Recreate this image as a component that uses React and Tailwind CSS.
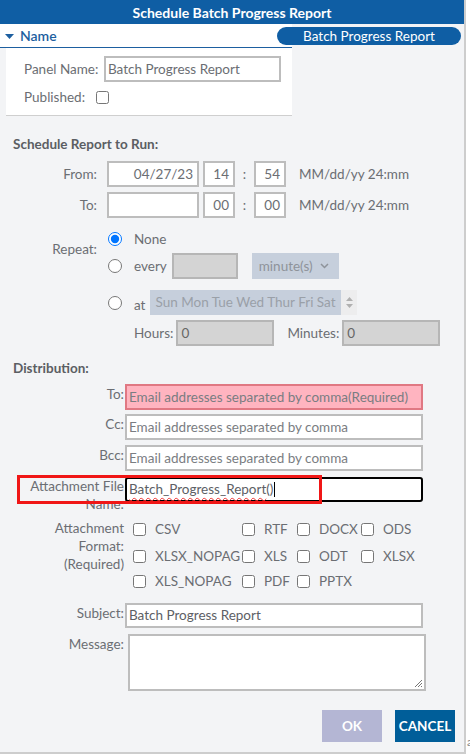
import React from "react";

const F = { fontFamily: "Lato, 'Liberation Sans', sans-serif" };

function Cb({ label, w }) {
  return (
    <div className={`flex items-center ${w}`}>
      <input type="checkbox" readOnly className="m-0 w-[13px] h-[13px]" />
      <span className="ml-[9px]">{label}</span>
    </div>
  );
}

export default function App() {
  return (
    <div className="relative w-[470px] h-[755px] bg-white overflow-hidden text-[#6b6e73] text-[13.5px]" style={F}>
      <span className="absolute left-[467px] top-[733px] text-[12px] text-[#888]">a</span>
      <div className="w-[466px] h-[754px] bg-[#f3f4f6] border-r-2 border-b-2 border-[#cdcdcd] flex flex-col">
        {/* Title */}
        <div className="h-[24px] bg-[#0f5ea4] text-white font-bold text-[14px] flex items-center justify-center">
          Schedule Batch Progress Report
        </div>

        {/* Name accordion */}
        <div className="relative">
          <div className="w-[292px]">
            <div className="h-[24px] bg-white border-b border-[#1d5fa0] flex items-center pl-[5px] text-[#1d5fa0] text-[14px] font-semibold">
              <svg width="9" height="6" viewBox="0 0 9 6" className="mr-[6px] mt-[2px]">
                <path d="M0 0 L9 0 L4.5 5 Z" fill="#1d5fa0" />
              </svg>
              Name
            </div>
            <div className="ml-[6px] bg-white border-b border-[#cfcfcf] h-[68px] pl-[18px] pt-[8px]">
              <div className="flex items-center h-[26px]">
                <span className="w-[80px]">Panel Name:</span>
                <div className="w-[177px] h-[26px] border-2 border-[#bdbdbd] bg-white flex items-center pl-[2px] text-[#6b6e73]">
                  Batch Progress Report
                </div>
              </div>
              <div className="flex items-center h-[20px] mt-[5px]">
                <span className="w-[72px]">Published:</span>
                <input type="checkbox" readOnly className="m-0 w-[13px] h-[13px]" />
              </div>
            </div>
          </div>
          <div className="absolute left-[277px] top-[3px] w-[184px] h-[18px] rounded-full bg-[#0f5ea4] text-white text-[13.5px] flex items-center justify-center">
            Batch Progress Report
          </div>
        </div>

        {/* Schedule */}
        <div className="pl-[13px] mt-[20px] font-bold text-[#5b5e63] leading-[16px]">Schedule Report to Run:</div>
        <div className="flex items-center mt-[9px] h-[26px]">
          <span className="w-[97px] text-right">From:</span>
          <div className="ml-[10px] w-[92px] h-[26px] border-2 border-[#bdbdbd] bg-white flex items-center justify-end pr-[4px]">04/27/23</div>
          <div className="ml-[4px] w-[32px] h-[26px] border-2 border-[#bdbdbd] bg-white flex items-center justify-end pr-[4px]">14</div>
          <span className="w-[19px] text-center">:</span>
          <div className="w-[32px] h-[26px] border-2 border-[#bdbdbd] bg-white flex items-center justify-end pr-[4px]">54</div>
          <span className="ml-[13px]">MM/dd/yy 24:mm</span>
        </div>
        <div className="flex items-center mt-[5px] h-[26px]">
          <span className="w-[97px] text-right">To:</span>
          <div className="ml-[10px] w-[92px] h-[26px] border-2 border-[#bdbdbd] bg-white" />
          <div className="ml-[4px] w-[32px] h-[26px] border-2 border-[#bdbdbd] bg-white flex items-center justify-end pr-[4px]">00</div>
          <span className="w-[19px] text-center">:</span>
          <div className="w-[32px] h-[26px] border-2 border-[#bdbdbd] bg-white flex items-center justify-end pr-[4px]">00</div>
          <span className="ml-[13px]">MM/dd/yy 24:mm</span>
        </div>

        {/* Repeat */}
        <div className="flex mt-[14px]">
          <div className="w-[97px] text-right pt-[7px]">Repeat:</div>
          <div className="ml-[11px] flex flex-col">
            <div className="flex items-center h-[14px]">
              <input type="radio" checked readOnly name="r" className="m-0 w-[14px] h-[14px]" />
              <span className="ml-[12px]">None</span>
            </div>
            <div className="flex items-center h-[26px] mt-[7px]">
              <input type="radio" readOnly name="r" className="m-0 w-[14px] h-[14px]" />
              <span className="ml-[12px]">every</span>
              <div className="ml-[5px] w-[66px] h-[26px] border-2 border-[#b6b6b6] bg-[#d4d4d4]" />
              <div className="ml-[14px] w-[87px] h-[26px] bg-[#c6cfdc] flex items-center pl-[7px] text-[#8e939a]">
                minute(s)
                <svg width="9" height="6" viewBox="0 0 9 6" className="ml-[7px]">
                  <path d="M1 1 L4.5 4.5 L8 1" stroke="#8e939a" strokeWidth="1.5" fill="none" />
                </svg>
              </div>
            </div>
            <div className="flex items-center h-[26px] mt-[10px]">
              <input type="radio" readOnly name="r" className="m-0 w-[14px] h-[14px] mt-[2px]" />
              <span className="ml-[12px] mt-[6px]">at</span>
              <div className="ml-[5px] w-[191px] h-[25px] bg-[#c6cfdc] flex items-center pl-[5px] text-[#9aa0a8] whitespace-nowrap">
                Sun Mon Tue Wed Thur Fri Sat
              </div>
              <div className="w-[16px] h-[25px] bg-[#ededee] flex flex-col items-center justify-center gap-[3px]">
                <svg width="7" height="4" viewBox="0 0 7 4"><path d="M0 4 L3.5 0 L7 4 Z" fill="#b0b0b0" /></svg>
                <svg width="7" height="4" viewBox="0 0 7 4"><path d="M0 0 L3.5 4 L7 0 Z" fill="#b0b0b0" /></svg>
              </div>
            </div>
            <div className="flex items-center h-[26px] mt-[5px] ml-[26px]">
              <span>Hours:</span>
              <div className="ml-[3px] w-[98px] h-[26px] border-2 border-[#b6b6b6] bg-[#d4d4d4] flex items-center pl-[3px] text-[#666]">0</div>
              <span className="ml-[13px]">Minutes:</span>
              <div className="ml-[3px] w-[98px] h-[26px] border-2 border-[#b6b6b6] bg-[#d4d4d4] flex items-center pl-[3px] text-[#666]">0</div>
            </div>
          </div>
        </div>

        {/* Distribution */}
        <div className="pl-[13px] mt-[14px] font-bold text-[#5b5e63] leading-[16px]">Distribution:</div>
        <div className="flex items-start mt-[8px]">
          <span className="w-[124px] text-right leading-[20px]">To:</span>
          <div className="ml-[1px] w-[298px] h-[26px] border-2 border-[#e07883] bg-[#ffb4c0] flex items-center pl-[2px] text-[#7a7d82] whitespace-nowrap">
            Email addresses separated by comma(Required)
          </div>
        </div>
        <div className="flex items-start mt-[4px]">
          <span className="w-[124px] text-right leading-[20px]">Cc:</span>
          <div className="ml-[1px] w-[298px] h-[26px] border-2 border-[#bdbdbd] bg-white flex items-center pl-[2px] text-[#7a7d82]">
            Email addresses separated by comma
          </div>
        </div>
        <div className="flex items-start mt-[5px]">
          <span className="w-[124px] text-right leading-[20px]">Bcc:</span>
          <div className="ml-[1px] w-[298px] h-[26px] border-2 border-[#bdbdbd] bg-white flex items-center pl-[2px] text-[#7a7d82]">
            Email addresses separated by comma
          </div>
        </div>
        <div className="relative flex items-start mt-[6px]">
          <span className="w-[124px] pl-[28px] text-right leading-[18px]">Attachment File Name:</span>
          <div className="ml-[1px] w-[298px] h-[25px] border-2 border-black rounded-[3px] bg-white flex items-center pl-[2px] text-[#5d6065]">
            <span className="underline decoration-wavy decoration-[#e33] decoration-1 underline-offset-[3px]">Batch_Progress_Report</span>
            <span>()</span>
            <span className="ml-[1px] w-px h-[15px] bg-black" />
          </div>
          <div className="absolute left-[17px] top-[-2px] w-[305px] h-[29px] border-[3px] border-[#f01616]" />
        </div>

        {/* Formats */}
        <div className="flex items-start mt-[9px]">
          <div className="w-[124px] text-right leading-[18px] mt-[-3px]">
            Attachment<br />Format:<br />(Required)
          </div>
          <div className="ml-[9px] flex flex-col gap-[13px]">
            <div className="flex items-center h-[14px]">
              <Cb label="CSV" w="w-[109px]" />
              <Cb label="RTF" w="w-[55px]" />
              <Cb label="DOCX" w="w-[64px]" />
              <Cb label="ODS" w="" />
            </div>
            <div className="flex items-center h-[14px]">
              <Cb label="XLSX_NOPAG" w="w-[109px]" />
              <Cb label="XLS" w="w-[55px]" />
              <Cb label="ODT" w="w-[64px]" />
              <Cb label="XLSX" w="" />
            </div>
            <div className="flex items-center h-[14px] mt-[-2px]">
              <Cb label="XLS_NOPAG" w="w-[109px]" />
              <Cb label="PDF" w="w-[55px]" />
              <Cb label="PPTX" w="" />
            </div>
          </div>
        </div>

        <div className="flex items-start mt-[15px]">
          <span className="w-[124px] text-right leading-[20px]">Subject:</span>
          <div className="ml-[1px] w-[298px] h-[25px] border-2 border-[#bdbdbd] bg-white flex items-center pl-[2px] text-[#5d6065]">
            Batch Progress Report
          </div>
        </div>
        <div className="flex items-start mt-[6px]">
          <span className="w-[124px] text-right leading-[20px]">Message:</span>
          <div className="relative ml-[4px] w-[298px] h-[57px] border-2 border-[#bdbdbd] bg-white">
            <svg width="9" height="9" viewBox="0 0 9 9" className="absolute right-[1px] bottom-[1px]">
              <path d="M8 1 L1 8 M8 4 L4 8 M8 7 L7 8" stroke="#777" strokeWidth="1" />
            </svg>
          </div>
        </div>

        <div className="flex justify-end gap-[13px] pr-[9px] mt-[19px]">
          <div className="w-[60px] h-[32px] bg-[#b4b6d4] text-white font-bold flex items-center justify-center text-[13.5px]">OK</div>
          <div className="w-[60px] h-[32px] bg-[#005e99] text-white font-bold flex items-center justify-center text-[13.5px]">CANCEL</div>
        </div>
      </div>
    </div>
  );
}
